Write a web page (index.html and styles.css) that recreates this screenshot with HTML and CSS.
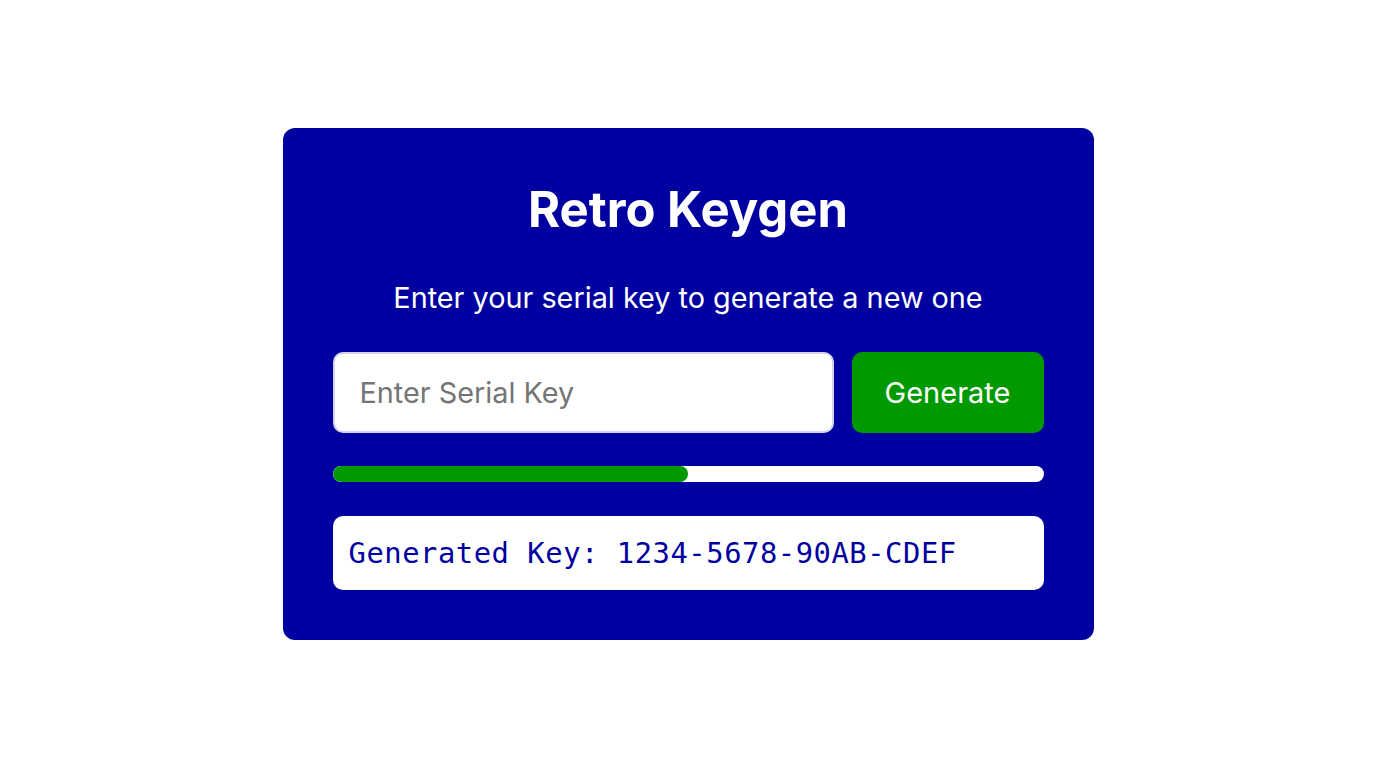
FILE: index.html
```
<!DOCTYPE html>
<html lang="en">
<head>
<meta charset="utf-8">
<title>Retro Keygen</title>
<link rel="stylesheet" href="styles.css">
</head>
<body>
<main class="card">
  <h1 class="title">Retro Keygen</h1>
  <p class="subtitle">Enter your serial key to generate a new one</p>
  <div class="form-row">
    <input class="serial-input" type="text" placeholder="Enter Serial Key">
    <button class="generate-btn" type="button">Generate</button>
  </div>
  <div class="progress"><div class="progress-fill" style="width: 50%"></div></div>
  <div class="output">Generated Key: 1234-5678-90AB-CDEF</div>
</main>
</body>
</html>
```

FILE: styles.css
```
* { box-sizing: border-box; }
html, body { height: 100%; }
body {
  margin: 0;
  background: #ffffff;
  font-family: Inter, "Noto Sans", sans-serif;
  display: flex;
  align-items: center;
  justify-content: center;
}
.card {
  width: 811px;
  background: #0000a0;
  border-radius: 12px;
  padding: 52px 50px 50px;
  color: #ffffff;
  display: flex;
  flex-direction: column;
}
.title {
  margin: 0;
  font-size: 49px;
  font-weight: 700;
  line-height: 60px;
  text-align: center;
}
.subtitle {
  margin: 40px 0 0;
  font-size: 28.8px;
  font-weight: 400;
  line-height: 35px;
  text-align: center;
}
.form-row {
  margin-top: 37px;
  display: flex;
  gap: 18px;
  height: 81px;
}
.serial-input {
  flex: 0 0 500px;
  height: 81px;
  border: 2px solid #d4d4ec;
  border-radius: 10px;
  background: #ffffff;
  padding: 0 25px;
  font-family: Inter, "Noto Sans", sans-serif;
  font-size: 28.8px;
  color: #333;
  outline: none;
}
.serial-input::placeholder { color: #757575; }
.generate-btn {
  flex: 1;
  height: 81px;
  border: none;
  border-radius: 10px;
  background: #009900;
  color: #ffffff;
  font-family: Inter, "Noto Sans", sans-serif;
  font-size: 29px;
  cursor: pointer;
}
.progress {
  margin-top: 33px;
  height: 16px;
  background: #ffffff;
  border-radius: 8px;
  overflow: hidden;
}
.progress-fill {
  height: 100%;
  background: #009900;
  border-radius: 8px;
}
.output {
  margin-top: 34px;
  height: 74px;
  background: #ffffff;
  border-radius: 10px;
  padding: 0 16px;
  display: flex;
  align-items: center;
  color: #0000a0;
  font-family: "DejaVu Sans Mono", "Liberation Mono", monospace;
  font-size: 28.8px;
  letter-spacing: 0.55px;
}
```
